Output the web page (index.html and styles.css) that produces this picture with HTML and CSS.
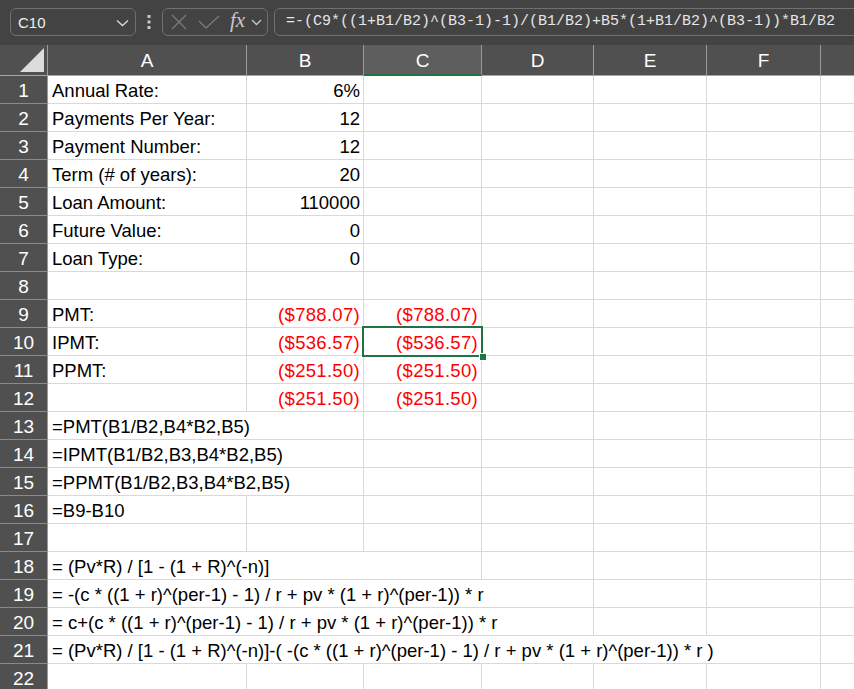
FILE: index.html
```html
<!DOCTYPE html>
<html>
<head>
<meta charset="utf-8">
<link rel="stylesheet" href="styles.css">
</head>
<body>
<div class="toolbar">
  <div class="namebox">
    <span class="name">C10</span>
    <svg class="chev" width="13" height="8" viewBox="0 0 13 8"><path d="M1 1.5 L6.5 6.5 L12 1.5" fill="none" stroke="#d8d8d8" stroke-width="1.4"/></svg>
  </div>
  <div class="dots">
    <svg width="4" height="14" viewBox="0 0 4 14"><rect x="0.5" y="0" width="3" height="3" fill="#c8c8c8"/><rect x="0.5" y="5.5" width="3" height="3" fill="#c8c8c8"/><rect x="0.5" y="11" width="3" height="3" fill="#c8c8c8"/></svg>
  </div>
  <div class="fxgroup">
    <svg class="ico-x" width="16" height="16" viewBox="0 0 16 16"><path d="M1 1 L15 15 M15 1 L1 15" stroke="#7a7a7a" stroke-width="1.4" fill="none"/></svg>
    <svg class="ico-check" width="22" height="14" viewBox="0 0 22 14"><path d="M1 6 L8 13 L21 1" stroke="#7a7a7a" stroke-width="1.4" fill="none"/></svg>
    <span class="fx">fx</span>
    <svg class="chev-s" width="11" height="7" viewBox="0 0 11 7"><path d="M1 1 L5.5 5.5 L10 1" fill="none" stroke="#c8c8c8" stroke-width="1.3"/></svg>
  </div>
  <div class="formula">=-(C9*((1+B1/B2)^(B3-1)-1)/(B1/B2)+B5*(1+B1/B2)^(B3-1))*B1/B2</div>
</div>

<div class="sheet">
  <div class="row head">
    <div class="corner"><span class="tri"></span></div>
    <div class="ch">A</div><div class="ch">B</div><div class="ch sel">C</div><div class="ch">D</div><div class="ch">E</div><div class="ch">F</div><div class="ch last"></div>
  </div>

  <div class="row"><div class="rh">1</div><div class="c">Annual Rate:</div><div class="c r">6%</div><div class="c"></div><div class="c"></div><div class="c"></div><div class="c"></div><div class="c last"></div></div>
  <div class="row"><div class="rh">2</div><div class="c">Payments Per Year:</div><div class="c r">12</div><div class="c"></div><div class="c"></div><div class="c"></div><div class="c"></div><div class="c last"></div></div>
  <div class="row"><div class="rh">3</div><div class="c">Payment Number:</div><div class="c r">12</div><div class="c"></div><div class="c"></div><div class="c"></div><div class="c"></div><div class="c last"></div></div>
  <div class="row"><div class="rh">4</div><div class="c">Term (# of years):</div><div class="c r">20</div><div class="c"></div><div class="c"></div><div class="c"></div><div class="c"></div><div class="c last"></div></div>
  <div class="row"><div class="rh">5</div><div class="c">Loan Amount:</div><div class="c r">110000</div><div class="c"></div><div class="c"></div><div class="c"></div><div class="c"></div><div class="c last"></div></div>
  <div class="row"><div class="rh">6</div><div class="c">Future Value:</div><div class="c r">0</div><div class="c"></div><div class="c"></div><div class="c"></div><div class="c"></div><div class="c last"></div></div>
  <div class="row"><div class="rh">7</div><div class="c">Loan Type:</div><div class="c r">0</div><div class="c"></div><div class="c"></div><div class="c"></div><div class="c"></div><div class="c last"></div></div>
  <div class="row"><div class="rh">8</div><div class="c"></div><div class="c"></div><div class="c"></div><div class="c"></div><div class="c"></div><div class="c"></div><div class="c last"></div></div>
  <div class="row"><div class="rh">9</div><div class="c">PMT:</div><div class="c r neg">($788.07)</div><div class="c r neg">($788.07)</div><div class="c"></div><div class="c"></div><div class="c"></div><div class="c last"></div></div>
  <div class="row"><div class="rh">10</div><div class="c">IPMT:</div><div class="c r neg">($536.57)</div><div class="c r neg active">($536.57)<span class="handle"></span></div><div class="c"></div><div class="c"></div><div class="c"></div><div class="c last"></div></div>
  <div class="row"><div class="rh">11</div><div class="c">PPMT:</div><div class="c r neg">($251.50)</div><div class="c r neg">($251.50)</div><div class="c"></div><div class="c"></div><div class="c"></div><div class="c last"></div></div>
  <div class="row"><div class="rh">12</div><div class="c"></div><div class="c r neg">($251.50)</div><div class="c r neg">($251.50)</div><div class="c"></div><div class="c"></div><div class="c"></div><div class="c last"></div></div>
  <div class="row"><div class="rh">13</div><div class="c s2">=PMT(B1/B2,B4*B2,B5)</div><div class="c"></div><div class="c"></div><div class="c"></div><div class="c"></div><div class="c last"></div></div>
  <div class="row"><div class="rh">14</div><div class="c s2">=IPMT(B1/B2,B3,B4*B2,B5)</div><div class="c"></div><div class="c"></div><div class="c"></div><div class="c"></div><div class="c last"></div></div>
  <div class="row"><div class="rh">15</div><div class="c s2">=PPMT(B1/B2,B3,B4*B2,B5)</div><div class="c"></div><div class="c"></div><div class="c"></div><div class="c"></div><div class="c last"></div></div>
  <div class="row"><div class="rh">16</div><div class="c">=B9-B10</div><div class="c"></div><div class="c"></div><div class="c"></div><div class="c"></div><div class="c"></div><div class="c last"></div></div>
  <div class="row"><div class="rh">17</div><div class="c"></div><div class="c"></div><div class="c"></div><div class="c"></div><div class="c"></div><div class="c"></div><div class="c last"></div></div>
  <div class="row"><div class="rh">18</div><div class="c s3">= (Pv*R) / [1 - (1 + R)^(-n)]</div><div class="c"></div><div class="c"></div><div class="c"></div><div class="c last"></div></div>
  <div class="row"><div class="rh">19</div><div class="c s4">= -(c * ((1 + r)^(per-1) - 1) / r + pv * (1 + r)^(per-1)) * r</div><div class="c"></div><div class="c"></div><div class="c last"></div></div>
  <div class="row"><div class="rh">20</div><div class="c s4">= c+(c * ((1 + r)^(per-1) - 1) / r + pv * (1 + r)^(per-1)) * r</div><div class="c"></div><div class="c"></div><div class="c last"></div></div>
  <div class="row"><div class="rh">21</div><div class="c s6">= (Pv*R) / [1 - (1 + R)^(-n)]-( -(c * ((1 + r)^(per-1) - 1) / r + pv * (1 + r)^(per-1)) * r )</div><div class="c last"></div></div>
  <div class="row"><div class="rh">22</div><div class="c"></div><div class="c"></div><div class="c"></div><div class="c"></div><div class="c"></div><div class="c"></div><div class="c last"></div></div>
</div>
</body>
</html>
```

FILE: styles.css
```css
html, body {
  margin: 0;
  padding: 0;
  background: #ffffff;
  overflow: hidden;
}
body {
  width: 854px;
  height: 689px;
  font-family: "Liberation Sans", Arial, sans-serif;
}

/* ---------- toolbar ---------- */
.toolbar {
  height: 45px;
  background: #434343;
  display: flex;
  align-items: flex-start;
  padding: 8px 0 0 10px;
  box-sizing: border-box;
  overflow: hidden;
  white-space: nowrap;
}
.namebox {
  width: 126px;
  height: 28px;
  box-sizing: border-box;
  border: 1px solid #707070;
  border-radius: 6px;
  display: flex;
  align-items: center;
  justify-content: space-between;
  padding: 0 6px 0 7px;
  flex: none;
}
.name {
  color: #f0f0f0;
  font-size: 15px;
}
.chev { margin-top: 1px; }
.dots {
  width: 26px;
  height: 28px;
  display: flex;
  align-items: center;
  justify-content: center;
  flex: none;
}
.fxgroup {
  width: 106px;
  height: 28px;
  box-sizing: border-box;
  border: 1px solid #707070;
  border-radius: 6px;
  display: flex;
  align-items: center;
  padding: 0 0 0 8px;
  flex: none;
}
.ico-x { margin-right: 11px; }
.ico-check { margin-right: 10px; }
.fx {
  font-family: "Liberation Serif", "DejaVu Serif", serif;
  font-style: italic;
  font-size: 21px;
  color: #c8c8c8;
  line-height: 1;
  margin-top: -3px;
  margin-right: 6px;
}
.formula {
  flex: none;
  width: 640px;
  height: 28px;
  margin-left: 6px;
  box-sizing: border-box;
  border: 1px solid #707070;
  border-radius: 6px;
  color: #e6e6e6;
  font-family: "Liberation Mono", "DejaVu Sans Mono", monospace;
  font-size: 15px;
  line-height: 26px;
  padding-left: 11px;
}

/* ---------- sheet ---------- */
.row {
  display: grid;
  grid-template-columns: 48px 199px 117px 118px 112px 113px 114px 1fr;
  height: 28px;
}
.row.head { height: 31px; }

.corner, .ch {
  background: #505050;
  border-right: 1px solid #9a9a9a;
  border-bottom: 1px solid #a6a6a6;
  box-sizing: border-box;
}
.corner { position: relative; }
.tri {
  position: absolute;
  right: 3px;
  bottom: 3px;
  width: 0;
  height: 0;
  border-left: 24px solid transparent;
  border-bottom: 24px solid #dcdcdc;
}
.ch {
  color: #ffffff;
  font-size: 19px;
  display: flex;
  align-items: center;
  justify-content: center;
  padding-top: 2px;
}
.ch.sel {
  background: #5e5e5e;
  border-bottom: 2px solid #217346;
}
.ch.last { border-right: none; }

.rh {
  background: #505050;
  color: #ffffff;
  font-size: 19px;
  border-right: 1px solid #9a9a9a;
  border-bottom: 1px solid #8a8a8a;
  box-sizing: border-box;
  display: flex;
  align-items: center;
  justify-content: center;
  padding-top: 2px;
}

.c {
  border-right: 1px solid #d9d9d9;
  border-bottom: 1px solid #d9d9d9;
  box-sizing: border-box;
  font-size: 18.5px;
  color: #000000;
  display: flex;
  align-items: center;
  padding: 3px 3px 0 4px;
  white-space: nowrap;
  overflow: visible;
}
.c.r { justify-content: flex-end; }
.c.neg { color: #ff0000; letter-spacing: 0.3px; }
.c.last { border-right: none; }
.s2 { grid-column: span 2; }
.s3 { grid-column: span 3; }
.s4 { grid-column: span 4; }
.s6 { grid-column: span 6; }

.c.active { position: relative; }
.c.active::before {
  content: "";
  position: absolute;
  left: -2px;
  top: -2px;
  right: -2px;
  bottom: -2px;
  border: 2px solid #217346;
  pointer-events: none;
}
.handle {
  position: absolute;
  right: -5px;
  bottom: -5px;
  width: 6px;
  height: 6px;
  background: #217346;
  outline: 1px solid #ffffff;
  z-index: 2;
}
```
